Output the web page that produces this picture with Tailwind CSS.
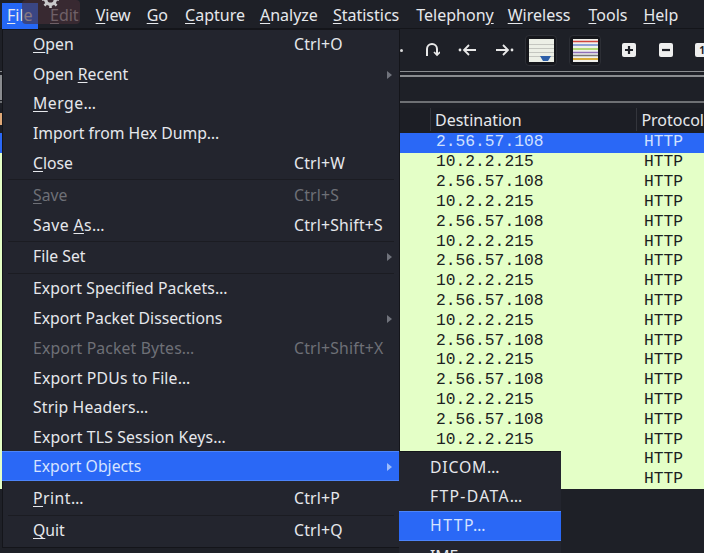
<!DOCTYPE html>
<html lang="en">
  <head>
    <meta charset="UTF-8" />
    <title>Wireshark</title>
    <script src="https://cdn.jsdelivr.net/npm/@tailwindcss/browser@4"></script>
  </head>
  <body class="bg-[#1e2027] overflow-hidden">
    <div class="relative w-[704px] h-[553px] overflow-hidden font-['Noto_Sans',sans-serif] text-[16px] text-[#e6e8ec]">
      <!-- Menubar -->
      <nav class="relative flex h-[29px] items-center border-b border-[#14151a] pl-[2px] pt-[1px] leading-none">
        <span class="absolute left-[2px] top-[3px] h-[26px] w-[36px] bg-[#2567f5]"></span>
        <span class="relative ml-[5px] w-[29px] text-[#e6e8ec]"><u class="underline-offset-2">F</u>ile</span>
        <span class="relative ml-[14px] text-[#a8a8ac]"><u class="underline-offset-2">E</u>dit</span>
        <span class="ml-[17px]"><u class="underline-offset-2">V</u>iew</span>
        <span class="ml-[16px]"><u class="underline-offset-2">G</u>o</span>
        <span class="ml-[17px]"><u class="underline-offset-2">C</u>apture</span>
        <span class="ml-[15px]"><u class="underline-offset-2">A</u>nalyze</span>
        <span class="ml-[15px]"><u class="underline-offset-2">S</u>tatistics</span>
        <span class="ml-[17px]">Telephon<u class="underline-offset-2">y</u></span>
        <span class="ml-[14px]"><u class="underline-offset-2">W</u>ireless</span>
        <span class="ml-[18px]"><u class="underline-offset-2">T</u>ools</span>
        <span class="ml-[16px]"><u class="underline-offset-2">H</u>elp</span>
      </nav>

      <!-- Ghost tooltip lying over the menubar -->
      <div class="absolute left-[22px] top-0 w-[58px] h-[24px] rounded-sm bg-[#4a3038]/60"></div>
      <svg class="absolute left-[42px] top-[-9px] w-[17px] h-[17px] text-[#c9c9cb]" viewBox="0 0 16 16" fill="none" stroke="currentColor" stroke-width="3.2">
        <circle cx="8" cy="8" r="4.5"></circle>
        <path stroke-width="2.4" d="M8 0v3M8 13v3M0 8h3M13 8h3M2.3 2.3l2 2M11.7 11.7l2 2M2.3 13.7l2-2M11.7 4.3l2-2"></path>
      </svg>

      <!-- Main toolbar -->
      <div class="flex h-[43px] items-center border-b border-[#8a8c90] pl-[400px]">
        <span class="h-[3px] w-[3px] shrink-0 rounded-full bg-[#d8d8d8]"></span>
        <svg class="ml-[21px] w-[16px] h-[16px] shrink-0" viewBox="0 0 16 16" fill="none" stroke="#e8e8e8" stroke-width="2">
          <path d="M3 14V7a5 5 0 0 1 10 0v5"></path>
          <path stroke-width="1.6" d="M10 10l3 3 3-3"></path>
        </svg>
        <svg class="ml-[18px] w-[20px] h-[16px] shrink-0" viewBox="0 0 20 16" fill="none" stroke="#e8e8e8" stroke-width="1.8">
          <circle cx="2" cy="8" r="1.4" fill="#e8e8e8" stroke="none"></circle>
          <path d="M18 8H6M11 3L6 8l5 5"></path>
        </svg>
        <svg class="ml-[16px] w-[20px] h-[16px] shrink-0" viewBox="0 0 20 16" fill="none" stroke="#e8e8e8" stroke-width="1.8">
          <circle cx="18" cy="8" r="1.4" fill="#e8e8e8" stroke="none"></circle>
          <path d="M2 8h12M9 3l5 5-5 5"></path>
        </svg>
        <div class="ml-[11px] flex h-[31px] w-[32px] shrink-0 items-center justify-center rounded-sm border border-[#2c2e35] bg-[#16171c]">
          <svg class="w-[25px] h-[23px]" viewBox="0 0 25 23">
            <rect width="25" height="23" fill="#ecefe6"></rect>
            <path stroke="#c4c6c0" d="M0 5.5h25M0 9.5h25M0 13.5h25M0 17.5h25"></path>
            <path fill="#2d5fa8" d="M11 17h11l-3 5h-5z"></path>
          </svg>
        </div>
        <div class="ml-[12px] flex h-[31px] w-[32px] shrink-0 items-center justify-center rounded-sm border border-[#2c2e35] bg-[#16171c]">
          <svg class="w-[25px] h-[23px]" viewBox="0 0 25 23">
            <rect width="25" height="23" fill="#f0f0ec"></rect>
            <path stroke="#d0453c" stroke-width="1.5" d="M0 2.5h25"></path>
            <path stroke="#6c8ad0" stroke-width="1.5" d="M0 6h25"></path>
            <path stroke="#9bd14f" stroke-width="1.5" d="M0 10h25"></path>
            <path stroke="#8f6fb8" stroke-width="1.5" d="M0 13.5h25"></path>
            <path stroke="#77777a" stroke-width="1.5" d="M0 16.5h25"></path>
            <path stroke="#d8ac3c" stroke-width="2" d="M0 20h25"></path>
          </svg>
        </div>
        <div class="ml-[21px] flex h-[14px] w-[14px] shrink-0 items-center justify-center rounded-[2px] bg-[#eeeeee] text-[#1e2027]">
          <svg class="w-[8px] h-[8px]" viewBox="0 0 8 8" stroke="currentColor" stroke-width="2.2"><path d="M0 4h8M4 0v8"></path></svg>
        </div>
        <div class="ml-[23px] flex h-[14px] w-[14px] shrink-0 items-center justify-center rounded-[2px] bg-[#eeeeee] text-[#1e2027]">
          <svg class="w-[8px] h-[8px]" viewBox="0 0 8 8" stroke="currentColor" stroke-width="2.2"><path d="M0 4h8"></path></svg>
        </div>
        <div class="ml-[22px] flex h-[14px] w-[14px] shrink-0 items-center justify-center rounded-[2px] bg-[#eeeeee] text-[10px] font-bold leading-none text-[#1e2027]">1</div>
      </div>

      <!-- Filter rows -->
      <div class="mt-[3px] h-[2px] bg-[#8a8c90]"></div>
      <div class="h-[24px]"></div>
      <div class="h-[2px] bg-[#6e7074]"></div>

      <!-- Packet list -->
      <div class="mt-[5px] flex h-[25px] items-center bg-[#1c1e25] pb-[2px] pl-[430px]">
        <div class="flex h-[23px] w-[208px] items-center border-l border-[#33353c] pl-[4px]">Destination</div>
        <div class="flex h-[23px] items-center border-l border-[#33353c] pl-[4px] whitespace-nowrap">Protocol</div>
      </div>
      <div class="font-['Liberation_Mono',monospace] text-[16.3px] text-[#1c1e22]">
        <div class="flex h-[19.8px] items-center bg-[#2a68f6] pb-[1px] pl-[436px] text-[#cfe0ff]"><span class="w-[208px]">2.56.57.108</span><span>HTTP</span></div>
        <div class="flex h-[19.8px] items-center bg-[#e4ffc7] pl-[436px]"><span class="w-[208px]">10.2.2.215</span><span>HTTP</span></div>
        <div class="flex h-[19.8px] items-center bg-[#e4ffc7] pl-[436px]"><span class="w-[208px]">2.56.57.108</span><span>HTTP</span></div>
        <div class="flex h-[19.8px] items-center bg-[#e4ffc7] pl-[436px]"><span class="w-[208px]">10.2.2.215</span><span>HTTP</span></div>
        <div class="flex h-[19.8px] items-center bg-[#e4ffc7] pl-[436px]"><span class="w-[208px]">2.56.57.108</span><span>HTTP</span></div>
        <div class="flex h-[19.8px] items-center bg-[#e4ffc7] pl-[436px]"><span class="w-[208px]">10.2.2.215</span><span>HTTP</span></div>
        <div class="flex h-[19.8px] items-center bg-[#e4ffc7] pl-[436px]"><span class="w-[208px]">2.56.57.108</span><span>HTTP</span></div>
        <div class="flex h-[19.8px] items-center bg-[#e4ffc7] pl-[436px]"><span class="w-[208px]">10.2.2.215</span><span>HTTP</span></div>
        <div class="flex h-[19.8px] items-center bg-[#e4ffc7] pl-[436px]"><span class="w-[208px]">2.56.57.108</span><span>HTTP</span></div>
        <div class="flex h-[19.8px] items-center bg-[#e4ffc7] pl-[436px]"><span class="w-[208px]">10.2.2.215</span><span>HTTP</span></div>
        <div class="flex h-[19.8px] items-center bg-[#e4ffc7] pl-[436px]"><span class="w-[208px]">2.56.57.108</span><span>HTTP</span></div>
        <div class="flex h-[19.8px] items-center bg-[#e4ffc7] pl-[436px]"><span class="w-[208px]">10.2.2.215</span><span>HTTP</span></div>
        <div class="flex h-[19.8px] items-center bg-[#e4ffc7] pl-[436px]"><span class="w-[208px]">2.56.57.108</span><span>HTTP</span></div>
        <div class="flex h-[19.8px] items-center bg-[#e4ffc7] pl-[436px]"><span class="w-[208px]">10.2.2.215</span><span>HTTP</span></div>
        <div class="flex h-[19.8px] items-center bg-[#e4ffc7] pl-[436px]"><span class="w-[208px]">2.56.57.108</span><span>HTTP</span></div>
        <div class="flex h-[19.8px] items-center bg-[#e4ffc7] pl-[436px]"><span class="w-[208px]">10.2.2.215</span><span>HTTP</span></div>
        <div class="flex h-[19.8px] items-center bg-[#e4ffc7] pl-[436px]"><span class="w-[208px]"></span><span>HTTP</span></div>
        <div class="flex h-[19.8px] items-center bg-[#e4ffc7] pl-[436px]"><span class="w-[208px]"></span><span>HTTP</span></div>
      </div>

      <!-- Slivers of the window visible left of the menu -->
      <div class="absolute left-0 top-[77px] h-[23px] w-[2px] bg-[#8a8c90]"></div>
      <div class="absolute left-0 top-[113px] h-[12px] w-[2px] bg-[#dfa877]"></div>

      <!-- File menu -->
      <div class="absolute left-[2px] top-[29px] w-[398px] border border-[#14151a] bg-[#23252e] text-[15.75px] leading-none">
        <div class="flex h-[29.7px] items-center pl-[30px]"><span class="w-[261px]"><u class="underline-offset-2">O</u>pen</span><span class="tracking-[0.2px]">Ctrl+O</span></div>
        <div class="flex h-[29.7px] items-center justify-between pl-[30px] pr-[7px]"><span>Open <u class="underline-offset-2">R</u>ecent</span><span class="h-0 w-0 border-y-[4px] border-l-[5px] border-y-transparent border-l-[#70737c]"></span></div>
        <div class="flex h-[29.7px] items-center pl-[30px]"><span class="tracking-[0.5px]"><u class="underline-offset-2">M</u>erge…</span></div>
        <div class="flex h-[29.7px] items-center pl-[30px]"><span>Import from Hex Dump…</span></div>
        <div class="flex h-[29.7px] items-center pl-[30px]"><span class="w-[261px]"><u class="underline-offset-2">C</u>lose</span><span class="tracking-[0.2px]">Ctrl+W</span></div>
        <div class="mx-[5px] my-[1px] h-px bg-[#1b1c22]"></div>
        <div class="flex h-[29.7px] items-center pl-[30px] text-[#6e7077]"><span class="w-[261px]"><u class="underline-offset-2">S</u>ave</span><span class="tracking-[0.2px]">Ctrl+S</span></div>
        <div class="flex h-[29.7px] items-center pl-[30px]"><span class="w-[261px] tracking-[0.4px]">Save <u class="underline-offset-2">A</u>s…</span><span class="tracking-[0.2px]">Ctrl+Shift+S</span></div>
        <div class="mx-[5px] h-px bg-[#1b1c22]"></div>
        <div class="flex h-[29.7px] items-center justify-between pl-[30px] pr-[7px]"><span>File Set</span><span class="h-0 w-0 border-y-[4px] border-l-[5px] border-y-transparent border-l-[#70737c]"></span></div>
        <div class="mx-[5px] my-[1px] h-px bg-[#1b1c22]"></div>
        <div class="flex h-[29.7px] items-center pl-[30px]"><span class="tracking-[0.08px]">Export Specified Packets…</span></div>
        <div class="flex h-[29.7px] items-center justify-between pl-[30px] pr-[7px]"><span>Export Packet Dissections</span><span class="h-0 w-0 border-y-[4px] border-l-[5px] border-y-transparent border-l-[#70737c]"></span></div>
        <div class="flex h-[29.7px] items-center pl-[30px] text-[#6e7077]"><span class="w-[261px] tracking-[0.15px]">Export Packet Bytes…</span><span class="tracking-[0.2px]">Ctrl+Shift+X</span></div>
        <div class="flex h-[29.7px] items-center pl-[30px]"><span class="tracking-[0.18px]">Export PDUs to File…</span></div>
        <div class="flex h-[29.7px] items-center pl-[30px]"><span class="tracking-[0.15px]">Strip Headers…</span></div>
        <div class="flex h-[29.7px] items-center pl-[30px]"><span class="tracking-[0.17px]">Export TLS Session Keys…</span></div>
        <div class="-mx-px -mt-[1.5px] flex h-[30px] items-center justify-between border-y border-[#4c84fa] bg-[#2a68f6] pl-[31px] pr-[8px] pt-[2px] text-[#d6e3ff]"><span>Export Objects</span><span class="h-0 w-0 border-y-[4px] border-l-[5px] border-y-transparent border-l-[#9dbcfb]"></span></div>
        <div class="flex h-[33.5px] items-center pl-[30px] pt-[1px]"><span class="w-[261px] tracking-[0.5px]"><u class="underline-offset-2">P</u>rint…</span><span class="tracking-[0.2px]">Ctrl+P</span></div>
        <div class="mx-[5px] h-px bg-[#1b1c22]"></div>
        <div class="flex h-[31px] items-center pl-[30px]"><span class="w-[261px]"><u class="underline-offset-2">Q</u>uit</span><span class="tracking-[0.2px]">Ctrl+Q</span></div>
      </div>

      <!-- Export Objects submenu -->
      <div class="absolute left-[399px] top-[451px] w-[162px] border-y border-[#14151a] bg-[#23252e] text-[15.75px] leading-none">
        <div class="flex h-[30px] items-center pl-[31px] pt-[1px] tracking-[0.8px]">DICOM…</div>
        <div class="flex h-[29px] items-center pl-[31px] tracking-[1.3px]">FTP-DATA…</div>
        <div class="flex h-[30px] items-center border-y border-[#4c84fa] bg-[#2a68f6] pl-[31px] tracking-[1.5px] text-[#d6e3ff]">HTTP…</div>
        <div class="flex h-[24px] items-start pl-[31px] pt-[8px]">IMF…</div>
      </div>
    </div>
  </body>
</html>
